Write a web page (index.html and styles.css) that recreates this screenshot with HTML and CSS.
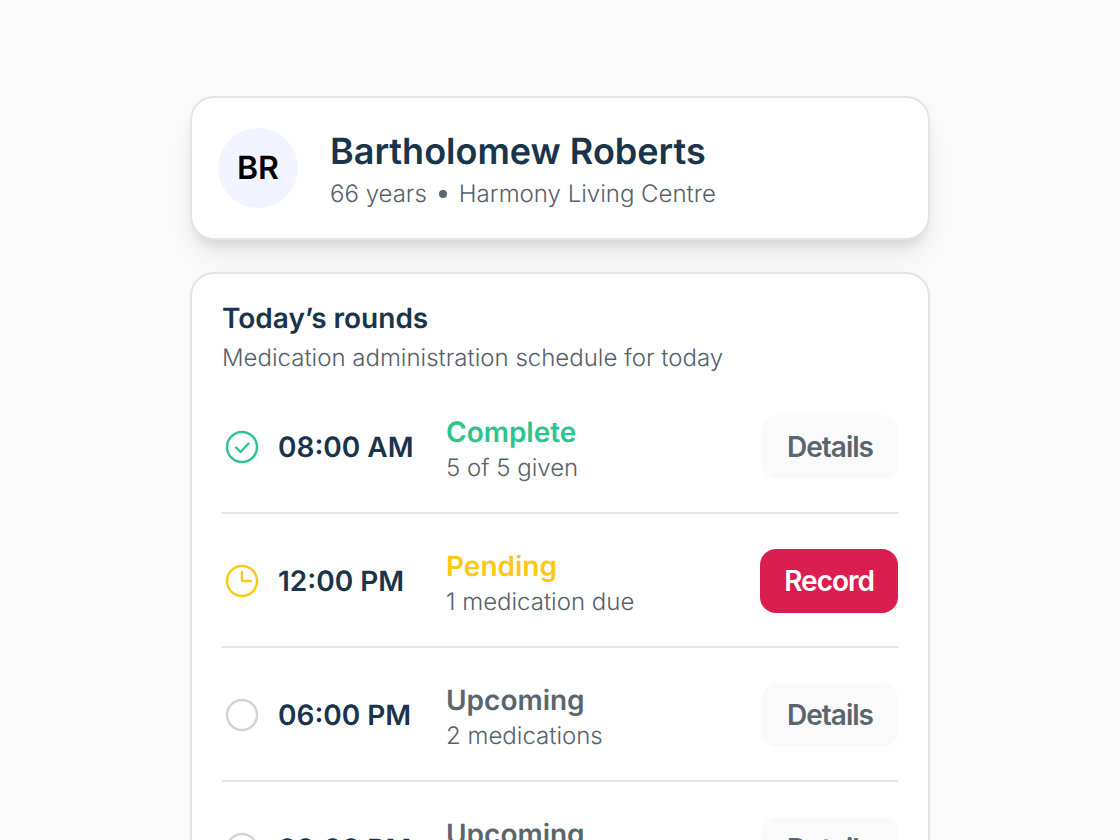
FILE: index.html
```html
<!DOCTYPE html>
<html lang="en">
<head>
    <meta charset="UTF-8">
    <meta name="viewport" content="width=device-width, initial-scale=1.0">
    <title>Today’s rounds</title>
    <link rel="stylesheet" href="styles.css">
</head>
<body>

<main class="container">
    <header class="card patient">
        <div class="avatar">BR</div>
        <div>
            <h1>Bartholomew Roberts</h1>
            <p class="patient-info">66 years<span class="dot"></span>Harmony Living Centre</p>
        </div>
    </header>

    <section class="card rounds">
        <h2>Today’s rounds</h2>
        <p class="subtitle">Medication administration schedule for today</p>

        <ul class="round-list">
            <li class="round">
                <svg class="icon complete" viewBox="0 0 40 40" aria-hidden="true">
                    <circle cx="20" cy="20" r="15"/>
                    <path d="M14 20.5l4.5 4.5 8-8.5"/>
                </svg>
                <span class="time">08:00 AM</span>
                <div class="status">
                    <div class="status-title complete">Complete</div>
                    <div class="status-text">5 of 5 given</div>
                </div>
                <button type="button">Details</button>
            </li>
            <li class="round">
                <svg class="icon pending" viewBox="0 0 40 40" aria-hidden="true">
                    <circle cx="20" cy="20" r="15"/>
                    <path d="M20 11v9h9"/>
                </svg>
                <span class="time">12:00 PM</span>
                <div class="status">
                    <div class="status-title pending">Pending</div>
                    <div class="status-text">1 medication due</div>
                </div>
                <button type="button" class="primary">Record</button>
            </li>
            <li class="round">
                <svg class="icon upcoming" viewBox="0 0 40 40" aria-hidden="true">
                    <circle cx="20" cy="20" r="15"/>
                </svg>
                <span class="time">06:00 PM</span>
                <div class="status">
                    <div class="status-title">Upcoming</div>
                    <div class="status-text">2 medications</div>
                </div>
                <button type="button">Details</button>
            </li>
            <li class="round">
                <svg class="icon upcoming" viewBox="0 0 40 40" aria-hidden="true">
                    <circle cx="20" cy="20" r="15"/>
                </svg>
                <span class="time">08:00 PM</span>
                <div class="status">
                    <div class="status-title">Upcoming</div>
                    <div class="status-text">2 medications</div>
                </div>
                <button type="button">Details</button>
            </li>
        </ul>
    </section>
</main>

</body>
</html>
```
FILE: styles.css
```css
* {
    box-sizing: border-box;
}

body {
    margin: 0;
    background: #fafafa;
    color: #56616a;
    font-family: 'Inter', sans-serif;
    font-size: 24px;
    font-weight: 300;
    line-height: 30px;
    text-rendering: geometricPrecision;
}

h1, h2, p, ul {
    margin: 0;
    padding: 0;
}

.container {
    width: 90%;
    max-width: 740px;
    margin: 0 auto;
    padding: 96px 0;
    display: flex;
    flex-direction: column;
    gap: 32px;
}

.card {
    position: relative;
    background: #fff;
    border: 2px solid #e4e4e4;
    border-radius: 24px;
}

.patient {
    display: flex;
    align-items: flex-start;
    gap: 32px;
    padding: 30px 26px 24px;
    box-shadow: 0 20px 30px -6px rgba(0, 0, 0, 0.08), 0 8px 12px -4px rgba(0, 0, 0, 0.1);
}

.avatar {
    flex: none;
    width: 80px;
    height: 80px;
    border-radius: 50%;
    background: #f2f5ff;
    color: #000;
    font-size: 32px;
    font-weight: 600;
    line-height: 80px;
    text-align: center;
}

h1 {
    color: #19344b;
    font-size: 36px;
    font-weight: 600;
    line-height: 46px;
}

.patient-info {
    display: flex;
    align-items: center;
    line-height: 40px;
}

.dot {
    width: 8px;
    height: 8px;
    margin: 0 12px;
    border-radius: 50%;
    background: #5b656e;
}

.rounds {
    padding: 24px 30px;
}

h2 {
    color: #19344b;
    font-size: 28px;
    font-weight: 600;
    line-height: 40px;
}

.subtitle {
    line-height: 40px;
}

.round-list {
    margin-top: 2px;
    list-style: none;
}

.round {
    display: flex;
    align-items: center;
    padding: 31px 0 29px;
    border-bottom: 2px solid #e4e4e4;
}

.round:last-child {
    border-bottom: none;
}

.icon {
    flex: none;
    width: 40px;
    height: 40px;
    fill: none;
    stroke: currentColor;
    stroke-width: 2.4;
    stroke-linecap: round;
    stroke-linejoin: round;
}

.time {
    width: 168px;
    margin-left: 16px;
    color: #19344b;
    font-size: 28px;
    font-weight: 600;
}

.status {
    flex: 1;
}

.status-title {
    color: #5b656e;
    font-size: 28px;
    font-weight: 600;
    line-height: 42px;
}

.complete {
    color: #2dc58c;
}

.pending {
    color: #fac916;
}

.upcoming {
    color: #d4d4d4;
}

button {
    min-width: 136px;
    height: 64px;
    padding: 0 24px;
    border: none;
    border-radius: 16px;
    background: #fafafa;
    color: #5b656e;
    font-family: inherit;
    font-size: 28px;
    font-weight: 600;
    letter-spacing: -1px;
    cursor: pointer;
}

button.primary {
    background: #da1f50;
    color: #fff;
}
```
